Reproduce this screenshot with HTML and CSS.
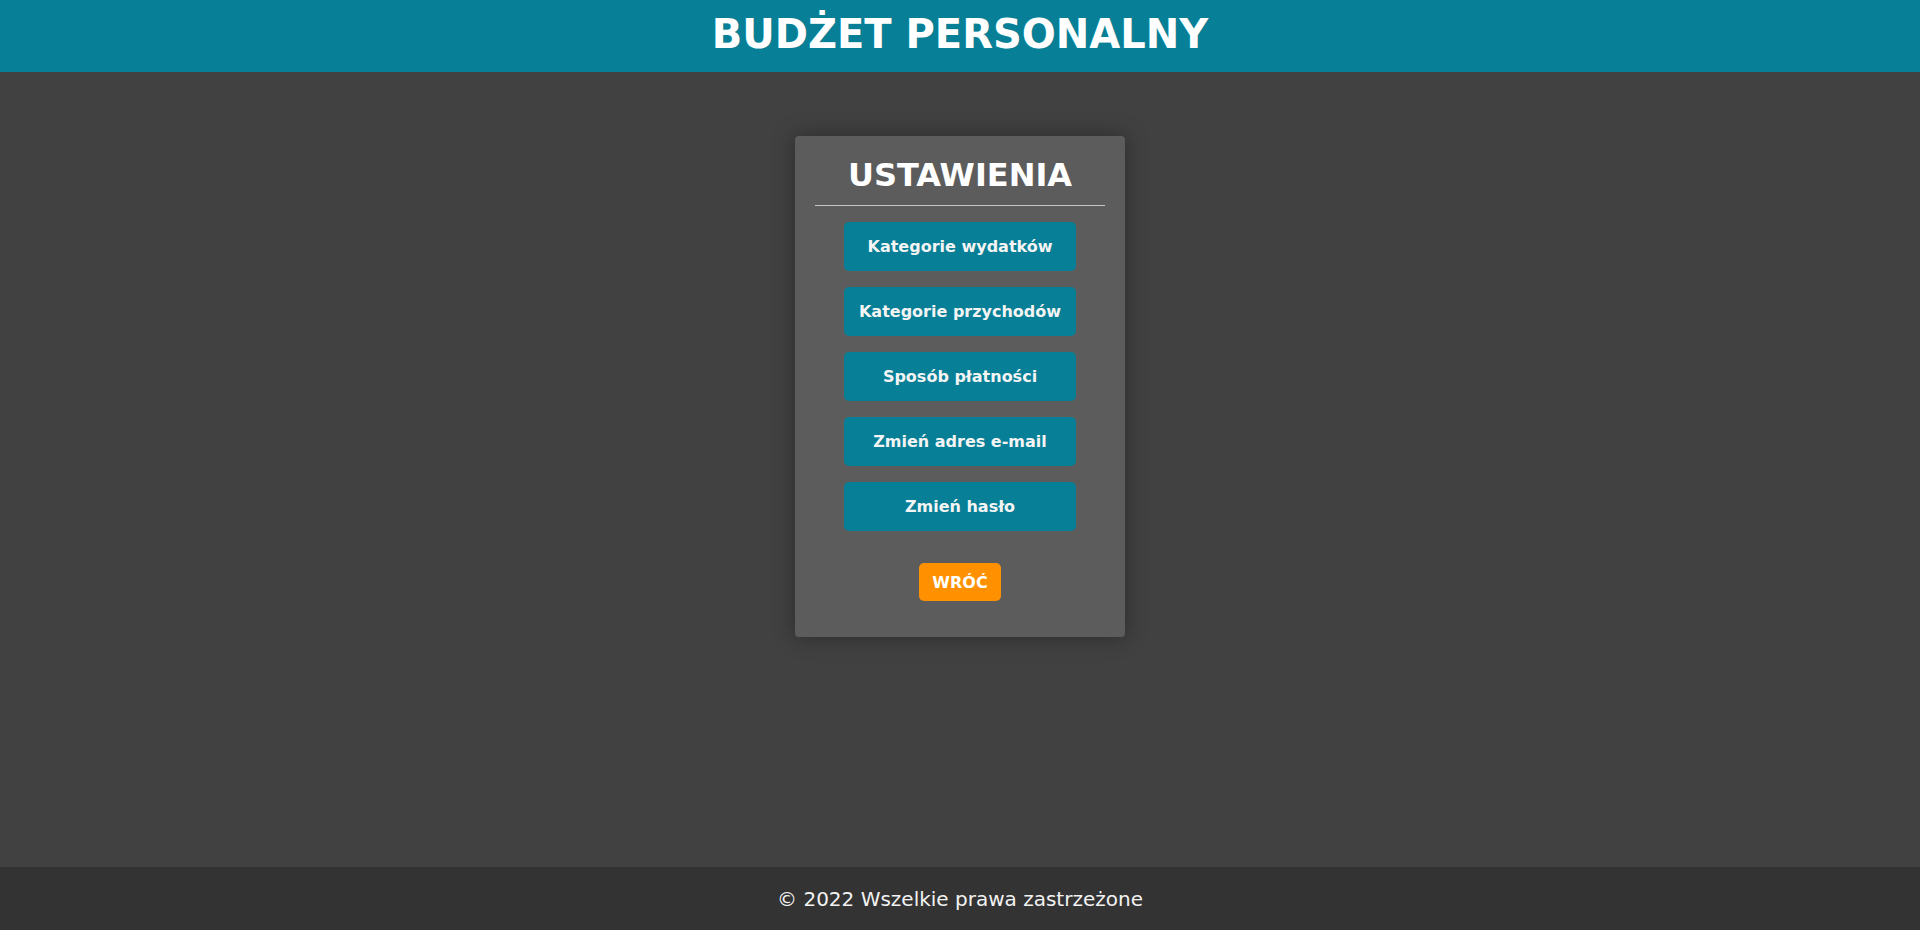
FILE: index.html
```html
<!DOCTYPE html>
<html lang="pl">
<head>
<meta charset="utf-8">
<title>Budżet personalny</title>
<link rel="stylesheet" href="styles.css">
</head>
<body>
<header class="top">
  <h1 class="brand">BUDŻET PERSONALNY</h1>
</header>
<main class="main">
  <section class="card">
    <h2 class="card-title">USTAWIENIA</h2>
    <hr class="divider">
    <nav class="menu">
      <a class="menu-btn" href="#">Kategorie wydatków</a>
      <a class="menu-btn" href="#">Kategorie przychodów</a>
      <a class="menu-btn" href="#">Sposób płatności</a>
      <a class="menu-btn" href="#">Zmień adres e-mail</a>
      <a class="menu-btn" href="#">Zmień hasło</a>
    </nav>
    <a class="back-btn" href="#">WRÓĆ</a>
  </section>
</main>
<footer class="bottom">© 2022 Wszelkie prawa zastrzeżone</footer>
</body>
</html>
```
FILE: styles.css
```css
* { box-sizing: border-box; }
html, body { margin: 0; padding: 0; }
body {
  height: 930px;
  display: flex;
  flex-direction: column;
  background: #414141;
  font-family: "DejaVu Sans", Verdana, sans-serif;
  color: #fff;
}
.top {
  height: 72px;
  flex: 0 0 72px;
  background: #077f96;
  display: flex;
  justify-content: center;
  padding-top: 11px;
}
.brand {
  margin: 0;
  font-size: 40px;
  line-height: 46px;
  font-weight: bold;
  color: #fff;
}
.main {
  flex: 1;
  display: flex;
  justify-content: center;
  align-items: flex-start;
  padding-top: 64px;
}
.card {
  width: 330px;
  background: #5c5c5c;
  border-radius: 4px;
  box-shadow: 0 0 22px rgba(0, 0, 0, 0.35);
  padding: 21px 20px 36px;
  display: flex;
  flex-direction: column;
  align-items: center;
}
.card-title {
  margin: 0;
  font-size: 32px;
  line-height: 37px;
  font-weight: bold;
  color: #fff;
}
.divider {
  width: 100%;
  margin: 11px 0 16px;
  border: 0;
  border-top: 1px solid #c4c4c4;
  height: 0;
}
.menu {
  display: flex;
  flex-direction: column;
  gap: 16px;
  align-items: center;
}
.menu-btn {
  width: 232px;
  height: 49px;
  background: #077f96;
  border-radius: 5px;
  display: flex;
  align-items: center;
  justify-content: center;
  color: #f4f4f4;
  font-weight: bold;
  font-size: 16px;
  text-decoration: none;
}
.back-btn {
  margin-top: 32px;
  width: 82px;
  height: 38px;
  background: #ff9100;
  border-radius: 5px;
  display: flex;
  align-items: center;
  justify-content: center;
  color: #fff;
  font-weight: bold;
  font-size: 16px;
  text-decoration: none;
}
.bottom {
  height: 63px;
  flex: 0 0 63px;
  background: #333333;
  display: flex;
  align-items: center;
  justify-content: center;
  font-size: 20px;
  color: #f2f2f2;
}
```
